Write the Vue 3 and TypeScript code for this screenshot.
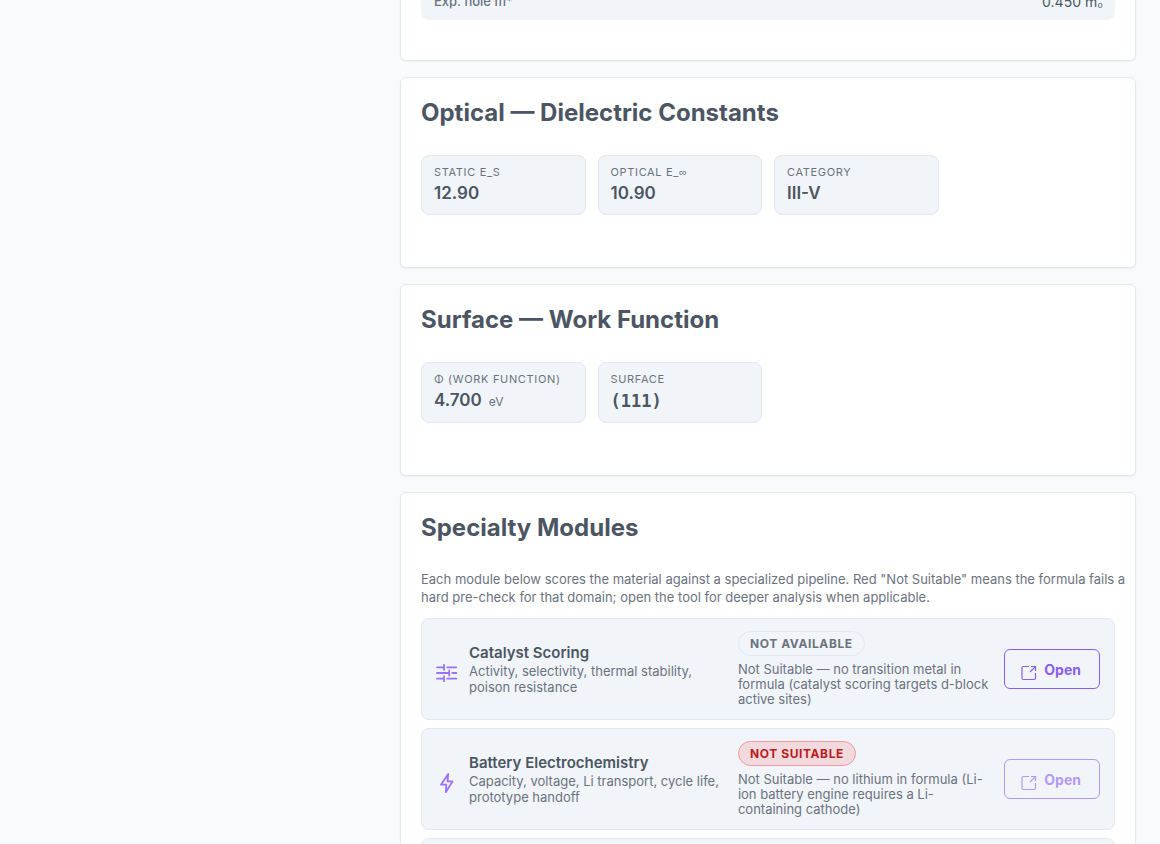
<script setup lang="ts">
interface Metric {
  label: string
  symbol?: string
  value: string
  unit?: string
  mono?: boolean
}

interface MetricSection {
  title: string
  metrics: Metric[]
}

interface SpecialtyModule {
  icon: 'sliders' | 'bolt'
  name: string
  description: string
  status: 'unavailable' | 'unsuitable'
  statusLabel: string
  reason: string
}

const sections: MetricSection[] = [
  {
    title: 'Optical — Dielectric Constants',
    metrics: [
      { label: 'Static E_s', value: '12.90' },
      { label: 'Optical E_', symbol: '∞', value: '10.90' },
      { label: 'Category', value: 'III-V' },
    ],
  },
  {
    title: 'Surface — Work Function',
    metrics: [
      { label: 'Φ (work function)', value: '4.700', unit: 'eV' },
      { label: 'Surface', value: '(111)', mono: true },
    ],
  },
]

const modules: SpecialtyModule[] = [
  {
    icon: 'sliders',
    name: 'Catalyst Scoring',
    description: 'Activity, selectivity, thermal stability, poison resistance',
    status: 'unavailable',
    statusLabel: 'Not available',
    reason: 'Not Suitable — no transition metal in formula (catalyst scoring targets d-block active sites)',
  },
  {
    icon: 'bolt',
    name: 'Battery Electrochemistry',
    description: 'Capacity, voltage, Li transport, cycle life, prototype handoff',
    status: 'unsuitable',
    statusLabel: 'Not suitable',
    reason: 'Not Suitable — no lithium in formula (Li-ion battery engine requires a Li-containing cathode)',
  },
]
</script>

<template>
  <div class="page">
    <main class="results">
      <section class="card card-first">
        <dl class="facts">
          <div class="fact">
            <dt>Exp. hole m*</dt>
            <dd>0.450 m<span class="symbol">₀</span></dd>
          </div>
        </dl>
      </section>

      <section v-for="section in sections" :key="section.title" class="card">
        <h2>{{ section.title }}</h2>
        <div class="metrics">
          <div v-for="metric in section.metrics" :key="metric.label" class="metric">
            <div class="metric-label">{{ metric.label }}<span v-if="metric.symbol" class="symbol">{{ metric.symbol }}</span></div>
            <div class="metric-value" :class="{ mono: metric.mono }">
              {{ metric.value }}<span v-if="metric.unit" class="metric-unit">{{ metric.unit }}</span>
            </div>
          </div>
        </div>
      </section>

      <section class="card">
        <h2>Specialty Modules</h2>
        <p class="intro">
          Each module below scores the material against a specialized pipeline. Red "Not Suitable" means the
          formula fails a hard pre-check for that domain; open the tool for deeper analysis when applicable.
        </p>
        <div class="modules">
          <article v-for="item in modules" :key="item.name" class="module">
            <svg v-if="item.icon === 'sliders'" class="module-icon" viewBox="0 0 22 22" aria-hidden="true">
              <path d="M1 5.300h7M11.300 5.300h9M8 2.800v5M1 11h12M16.300 11h4M13.200 8.500v5M1 16.700h7M11.300 16.700h9M8 14.200v5" />
            </svg>
            <svg v-else class="module-icon" viewBox="0 0 22 22" aria-hidden="true">
              <path d="M12.200 2L5 12.700h5.300L9.800 20.200L16.500 9.400h-5z" />
            </svg>
            <div class="module-info">
              <h3>{{ item.name }}</h3>
              <p>{{ item.description }}</p>
            </div>
            <div class="module-status">
              <span class="badge" :class="item.status">{{ item.statusLabel }}</span>
              <p>{{ item.reason }}</p>
            </div>
            <button type="button" class="open" :disabled="item.status === 'unsuitable'">
              <svg viewBox="0 0 16 16" aria-hidden="true">
                <path d="M8 1.500H2.500a1.500 1.500 0 0 0-1.500 1.500v10a1.500 1.500 0 0 0 1.500 1.500h10.500a1.500 1.500 0 0 0 1.500-1.500V8M10 1.500h4.500V6M14.200 1.800L9 7" />
              </svg>
              <span>Open</span>
            </button>
          </article>
          <article class="module"></article>
        </div>
      </section>
    </main>
  </div>
</template>

<style>
body {
  background: #f8fafc;
}
</style>

<style scoped>
.page {
  box-sizing: border-box;
  height: 100vh;
  overflow: hidden;
  padding: 0 24px 0 400px;
  background: #f8fafc;
  color: #4b5563;
  font-family: Inter, sans-serif;
}

.results {
  display: flex;
  flex-direction: column;
  gap: 16px;
}

.card {
  box-sizing: border-box;
  flex: none;
  padding: 20px 20px 52px;
  border: 1px solid #e2e8f0;
  border-radius: 6px;
  background: #fff;
  box-shadow: 0 1px 2px rgba(15, 23, 42, 0.05);
}

.card-first {
  margin-top: -36px;
  padding-bottom: 40px;
}

h2 {
  margin: 0 0 28px;
  font-size: 24px;
  font-weight: 700;
  line-height: 29px;
}

.facts {
  margin: 0;
}

.fact {
  display: flex;
  justify-content: space-between;
  padding: 8px 12px 9px 13px;
  border-radius: 8px;
  background: #f1f5f9;
  font-size: 14px;
  line-height: 18px;
}

.fact dt {
  color: #6b7280;
  font-size: 13px;
  font-weight: 500;
  line-height: 16px;
}

.fact dd {
  margin: 0;
}

.symbol {
  font-family: "Liberation Sans", sans-serif;
}

.metrics {
  display: grid;
  grid-template-columns: repeat(auto-fill, minmax(140px, 1fr));
  gap: 12px;
}

.metric {
  padding: 9px 12px;
  border: 1px solid #e2e8f0;
  border-radius: 8px;
  background: #f1f5f9;
}

.metric-label {
  color: #6b7280;
  font-size: 11px;
  line-height: 14px;
  letter-spacing: 0.06em;
  text-transform: uppercase;
}

.metric-value {
  margin-top: 4px;
  padding-bottom: 1px;
  font-size: 17px;
  font-weight: 600;
  line-height: 21px;
}

.metric-value.mono {
  padding: 1px 0 0;
  font-family: "DejaVu Sans Mono", monospace;
}

.metric-unit {
  margin-left: 7px;
  color: #6b7280;
  font-size: 12px;
  font-weight: 400;
}

.intro {
  margin: 0 -12px 12px 0;
  color: #6b7280;
  font-size: 13px;
  line-height: 18px;
}

.modules {
  display: grid;
  gap: 8px;
}

.module {
  display: grid;
  grid-template-columns: 21px minmax(0, 1.01fr) minmax(0, 1fr) auto;
  align-items: center;
  gap: 12px;
  box-sizing: border-box;
  min-height: 102px;
  padding: 12px 14px;
  border: 1px solid #e2e8f0;
  border-radius: 8px;
  background: #f1f5f9;
}

.module-icon {
  width: 22px;
  height: 22px;
  margin-top: 8px;
  fill: none;
  stroke: #8b5cf6;
  stroke-width: 1.8;
  stroke-linecap: round;
  stroke-linejoin: round;
  opacity: 0.85;
}

h3 {
  margin: 0;
  font-size: 15px;
  font-weight: 600;
  line-height: 20px;
}

.module-info p {
  margin: 0;
  color: #6b7280;
  font-size: 13px;
  line-height: 16px;
}

.module-status p {
  margin: 6px 0 0;
  color: #6b7280;
  font-size: 13px;
  line-height: 15px;
}

.badge {
  display: block;
  box-sizing: border-box;
  width: fit-content;
  padding: 4px 11px;
  border: 1px solid #e5e7eb;
  border-radius: 13px;
  color: #6b7280;
  font-size: 12px;
  font-weight: 700;
  line-height: 15px;
  letter-spacing: 0.05em;
  text-transform: uppercase;
}

.badge.unsuitable {
  border-color: #f09a9f;
  background: #f1d9de;
  color: #b91c1c;
}

.open {
  display: flex;
  align-items: center;
  justify-content: center;
  gap: 7px;
  box-sizing: border-box;
  height: 40px;
  padding: 2px 18px 0 16px;
  border: 1px solid #8b5cf6;
  border-radius: 6px;
  background: transparent;
  color: #8b5cf6;
  font: 700 14px/18px Inter, sans-serif;
}

.open:disabled {
  opacity: 0.6;
}

.open svg {
  width: 16px;
  height: 16px;
  margin-top: 5px;
  fill: none;
  stroke: currentColor;
  stroke-width: 1.2;
}
</style>
